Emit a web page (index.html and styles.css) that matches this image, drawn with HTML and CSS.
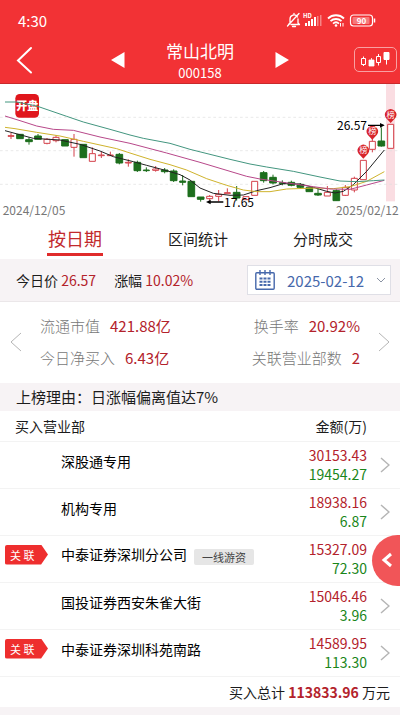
FILE: index.html
```html
<!DOCTYPE html>
<html lang="zh-CN">
<head>
    <meta charset="UTF-8">
    <meta name="viewport" content="width=device-width, initial-scale=1.0">
    <title>常山北明 000158</title>
    <link rel="stylesheet" href="styles.css">
</head>
<body>
    <header class="header">
        <div class="status-bar">
            <span>4:30</span>
            <svg class="status-icons" viewBox="0 0 92 16" aria-hidden="true">
                <!-- muted bell -->
                <g fill="none" stroke="#fff" stroke-width="1.3" stroke-linecap="round" stroke-linejoin="round">
                    <path d="M4 11V7a4 4 0 0 1 7.5-2M12 7v4l1.500 1.500H5M3.500 11.500l-1 1M8 2V1.500M6.500 14.500h3M13 1.500L1.500 14"/>
                </g>
                <!-- signal -->
                <text x="17" y="6" class="hd">HD</text>
                <g fill="#fff">
                    <rect x="19" y="11" width="2" height="3"/>
                    <rect x="22" y="9" width="2" height="5"/>
                    <rect x="25" y="7" width="2" height="7"/>
                    <rect x="28" y="5" width="2" height="9"/>
                    <rect x="31" y="4" width="1.5" height="10" opacity=".4"/>
                    <rect x="34" y="3" width="1.5" height="11" opacity=".4"/>
                </g>
                <!-- wifi -->
                <g fill="none" stroke="#fff" stroke-width="1.8">
                    <path d="M42 6.5a11.500 11.500 0 0 1 16 0M44.500 9.200a8 8 0 0 1 11 0M47 11.600a4.500 4.500 0 0 1 6 0"/>
                    <path d="M54.500 11v3.500M57 11v3.500" stroke-width="1"/>
                </g>
                <circle cx="50" cy="13.5" r="1.3" fill="#fff"/>
                <!-- battery -->
                <rect x="64.5" y="3" width="22" height="11" rx="3" fill="none" stroke="#fff" stroke-width="1.2"/>
                <rect x="66.5" y="5" width="17" height="7" rx="1" fill="#fff" opacity=".35"/>
                <path d="M88.5 6.500v4" stroke="#fff" stroke-width="1.5"/>
                <text x="75.5" y="11.5" text-anchor="middle" class="battery">90</text>
            </svg>
        </div>
        <nav class="nav">
            <a href="#" class="back" aria-label="返回">
                <svg width="18" height="28" viewBox="0 0 18 28"><path d="M15 2L2 14.500L15 26.500" fill="none" stroke="#fff" stroke-width="2" stroke-linecap="round"/></svg>
            </a>
            <div class="stock">
                <button class="icon-btn" aria-label="上一只"><svg width="14" height="16" viewBox="0 0 14 16"><path d="M0 8L13.500 0v16z" fill="#fff"/></svg></button>
                <div class="stock-name">
                    <h1>常山北明</h1>
                    <p>000158</p>
                </div>
                <button class="icon-btn" aria-label="下一只"><svg width="14" height="16" viewBox="0 0 14 16"><path d="M14 8L.5 0v16z" fill="#fff"/></svg></button>
            </div>
            <button class="kline-btn" aria-label="K线">
                <svg width="30" height="16" viewBox="0 0 30 16" fill="none" stroke="#fff">
                    <path d="M.5 6.500h4v6h-4zM2.500 4.500v2M2.500 12.500v1.500"/>
                    <path d="M8 8h5v6H8zM10.500 6v2" fill="#fff" stroke-width=".8"/>
                    <path d="M15.500 4.500h4v6h-4zM17.500 2v2.500M17.500 10.500v3"/>
                    <path d="M23 .5h5v7h-5zM25.500 7v5.500" fill="#fff"/>
                </svg>
            </button>
        </nav>
    </header>

    <main>
        <svg class="chart" viewBox="0 0 1200 408" role="img" aria-label="日K线">
            <rect x="1158" y="0" width="27" height="352" class="today"/>
            <path d="M0 100H1200M0 200H1200M0 301H1200" class="grid"/>
            <rect x="46" y="30" width="71" height="71" rx="13" fill="#e0161c"/>
            <text x="81.5" y="78" text-anchor="middle" class="open-badge">开盘</text>

            <!-- falling candles -->
            <g class="down">
                <path d="M87 160V182M114 150V160M358 207V241M412 230V264M439 250V264M494 252V268M521 256V294M548 273V304M602 340V353M710 306V350M791 261V296M819 272V301M847 289V304M874 290V307M901 297V314M954 312V336M1009 316V350M1144 130V188"/>
                <path d="M50 151h20v13h-20zM77 167h20v6h-20zM104 156h20v10h-20zM185 167h20v19h-20zM240 181h20v40h-20zM348 211h20v26h-20zM402 235h20v25h-20zM430 258h18v2h-18zM484 258h20v5h-20zM511 261h20v29h-20zM539 291h18v4h-18zM564 292h20v46h-20zM592 339h20v7h-20zM700 325h20v17h-20zM781 266h20v24h-20zM809 280h20v17h-20zM838 296h18v3h-18zM864 295h20v9h-20zM891 301h20v9h-20zM918 311h20v12h-20zM944 328h20v5h-20zM999 320h20v30h-20zM1134 171h20v15h-20z"/>
            </g>
            <!-- rising candles -->
            <g class="up">
                <path d="M33 147V165M141 162V181M168 154V175M222 150V218M277 190V209M304 203V222M331 203V215M385 226V248M467 246V263M629 333V350M656 318V352M682 313V328M982 306V324M1036 303V336M1063 278V325M1117 162V205"/>
                <path d="M24 155h18v2h-18zM132 166h18v12h-18zM159 160h18v10h-18zM213 166h18v24h-18zM268 209h18v23h-18zM295 213h18v2h-18zM322 213h18v2h-18zM376 235h18v2h-18zM458 255h18v4h-18zM620 337h18v7h-18zM647 331h18v6h-18zM673 326h18v3h-18zM729 338h18v9h-18zM755 292h18v42h-18zM973 325h18v11h-18zM1027 310h18v24h-18zM1054 283h18v35h-18zM1081 229h18v58h-18zM1108 172h18v24h-18zM1163 121h18v72h-18z"/>
            </g>

            <!-- moving averages -->
            <g class="ma">
                <polyline stroke="#222" points="15,140 70,155 100,163 180,168 240,181 300,201 340,218 400,233 440,244 500,260 540,272 570,288 600,312 640,328 690,334 730,333 770,320 810,311 850,299 900,300 940,310 980,322 1005,327 1030,322 1060,302 1100,262 1153,198"/>
                <polyline stroke="#cfb32c" points="15,130 45,134 110,145 180,156 250,172 350,194 390,207 450,226 510,242 560,258 620,284 680,304 730,318 770,323 810,323 860,315 950,312 1000,314 1050,308 1100,292 1153,263"/>
                <polyline stroke="#b8488a" points="15,96 60,110 110,126 160,136 220,139 300,159 390,178 500,207 600,235 690,262 740,277 780,285 870,298 940,308 990,315 1050,316 1100,303 1153,289"/>
                <polyline stroke="#43967f" points="15,54 50,54 110,66 200,97 250,114 330,136 390,153 430,163 510,178 570,196 630,211 690,226 750,240 800,249 880,262 960,279 1020,291 1070,293 1120,290 1153,288"/>
            </g>

            <!-- listing marks -->
            <g class="marks">
                <path d="M1076 209A17 17 0 1 1 1104 209L1090 224z"/>
                <path d="M1103 152A17 17 0 1 1 1131 152L1117 167z"/>
                <path d="M1158 102A17 17 0 1 1 1186 102L1172 117z"/>
                <text x="1090" y="208">榜</text>
                <text x="1117" y="151">榜</text>
                <text x="1172" y="101">榜</text>
            </g>

            <path d="M1104 124H1150M670 354H624" stroke="#000" stroke-width="4"/>
            <path d="M1154 124l-14-7v14zM618 354l14-7v14z"/>
            <text x="1101" y="137" text-anchor="end" class="price">26.57</text>
            <text x="672" y="368" class="price">17.65</text>
            <text x="8" y="393" class="day">2024/12/05</text>
            <text x="1196" y="393" text-anchor="end" class="day">2025/02/12</text>
        </svg>

        <nav class="tabs">
            <a href="#" class="active">按日期</a>
            <a href="#">区间统计</a>
            <a href="#">分时成交</a>
        </nav>

        <div class="price-bar">
            <p>今日价 <span class="red">26.57</span></p>
            <p>涨幅 <span class="red">10.02%</span></p>
            <div class="date-box">
                <label for="date" aria-label="日期">
                    <svg width="20" height="20" viewBox="0 0 20 20" fill="none" stroke="#4668ab">
                        <rect x=".8" y="2.8" width="18.4" height="16.4" rx="1" stroke-width="1.4"/>
                        <path d="M5 0v5M10 0v5M15 0v5" stroke-width="1.4"/>
                        <path d="M4.500 8.500h11M4.500 11.800h11M4.500 15h11" stroke-width="2" stroke-dasharray="3 1"/>
                    </svg>
                </label>
                <select id="date">
                    <option>2025-02-12</option>
                </select>
                <svg class="chevron" width="10" height="6" viewBox="0 0 10 6"><path d="M1 1l4 4l4-4" fill="none" stroke="#8a93a3"/></svg>
            </div>
        </div>

        <section class="stats">
            <button class="icon-btn" aria-label="上一页"><svg width="12" height="20" viewBox="0 0 12 20"><path d="M11 1L1 10l10 9" fill="none" stroke="#b5b5b5"/></svg></button>
            <dl>
                <div><dt>流通市值</dt><dd>421.88亿</dd></div>
                <div class="end"><dt>换手率</dt><dd>20.92%</dd></div>
                <div><dt>今日净买入</dt><dd>6.43亿</dd></div>
                <div class="end"><dt>关联营业部数</dt><dd>2</dd></div>
            </dl>
            <button class="icon-btn" aria-label="下一页"><svg width="12" height="20" viewBox="0 0 12 20"><path d="M1 1l10 9L1 19" fill="none" stroke="#b5b5b5"/></svg></button>
        </section>

        <h2 class="reason">上榜理由：日涨幅偏离值达7%</h2>

        <div class="list">
            <table>
                <thead>
                    <tr>
                        <th colspan="2">买入营业部</th>
                        <th class="amount">金额(万)</th>
                        <th class="more"></th>
                    </tr>
                </thead>
                <tbody>
                    <tr>
                        <td class="mark"></td>
                        <td class="name">深股通专用</td>
                        <td class="amount"><span class="buy">30153.43</span><span class="sell">19454.27</span></td>
                        <td class="more"><a href="#" aria-label="详情"><svg width="10" height="16" viewBox="0 0 10 16"><path d="M1 1l8 7l-8 7"/></svg></a></td>
                    </tr>
                    <tr>
                        <td class="mark"></td>
                        <td class="name">机构专用</td>
                        <td class="amount"><span class="buy">18938.16</span><span class="sell">6.87</span></td>
                        <td class="more"><a href="#" aria-label="详情"><svg width="10" height="16" viewBox="0 0 10 16"><path d="M1 1l8 7l-8 7"/></svg></a></td>
                    </tr>
                    <tr>
                        <td class="mark"><span class="tag">关 联</span></td>
                        <td class="name">中泰证券深圳分公司<span class="label">一线游资</span></td>
                        <td class="amount"><span class="buy">15327.09</span><span class="sell">72.30</span></td>
                        <td class="more">
                            <button class="drawer" aria-label="展开"><svg width="12" height="16" viewBox="0 0 12 16"><path d="M10 2L3 8l7 6"/></svg></button>
                        </td>
                    </tr>
                    <tr>
                        <td class="mark"></td>
                        <td class="name">国投证券西安朱雀大街</td>
                        <td class="amount"><span class="buy">15046.46</span><span class="sell">3.96</span></td>
                        <td class="more"><a href="#" aria-label="详情"><svg width="10" height="16" viewBox="0 0 10 16"><path d="M1 1l8 7l-8 7"/></svg></a></td>
                    </tr>
                    <tr>
                        <td class="mark"><span class="tag">关 联</span></td>
                        <td class="name">中泰证券深圳科苑南路</td>
                        <td class="amount"><span class="buy">14589.95</span><span class="sell">113.30</span></td>
                        <td class="more"><a href="#" aria-label="详情"><svg width="10" height="16" viewBox="0 0 10 16"><path d="M1 1l8 7l-8 7"/></svg></a></td>
                    </tr>
                </tbody>
            </table>
            <p class="total">买入总计 <strong>113833.96</strong> 万元</p>
        </div>
    </main>
</body>
</html>
```

FILE: styles.css
```css
* { box-sizing: border-box; margin: 0; padding: 0; }
body { font-family: "Noto Sans CJK SC", "Noto Sans", sans-serif; font-size: 14px; color: #1c1c1c; background: #fff; overflow-x: hidden; }
a { color: inherit; text-decoration: none; }
button { background: none; border: none; cursor: pointer; }
svg { display: block; }
.red { color: #b3222b; }
.icon-btn { display: flex; align-items: center; justify-content: center; }

/* header */
.header { background: #f23235; color: #fff; border-bottom: 1px solid #c9292c; }
.status-bar { display: flex; justify-content: space-between; align-items: center; height: 36px; padding: 4px 22px 0 18px; font-size: 15px; }
.status-icons { width: 92px; height: 16px; }
.hd { font-size: 6px; font-weight: bold; fill: #fff; }
.battery { font-size: 8px; font-weight: bold; fill: #fff; }
.nav { display: flex; justify-content: space-between; align-items: center; height: 47px; padding: 0 3px 0 16px; }
.back { width: 30px; }
.stock { display: flex; align-items: center; gap: 41px; }
.stock-name { text-align: center; }
.stock-name h1 { font-size: 17px; line-height: 25px; font-weight: normal; }
.stock-name p { font-size: 13px; line-height: 19px; }
.kline-btn { display: flex; align-items: center; justify-content: center; width: 43px; height: 25px; border: 1px solid #f9a0a2; border-radius: 5px; }

/* chart */
.chart { width: 100%; }
.today { fill: #fadde2; }
.grid { stroke: #dedede; stroke-width: 2; stroke-dasharray: 8 8; }
.open-badge { font-size: 33px; font-weight: 900; fill: #fff; }
.down { fill: #1d6e1d; stroke: #1d6e1d; stroke-width: 3; }
.up { fill: #fff; stroke: #d3404a; stroke-width: 3; }
.ma { fill: none; stroke-width: 3; stroke-linejoin: round; }
.marks { fill: #d8252c; }
.marks text { font-size: 25px; fill: #fff; text-anchor: middle; }
.price { font-size: 36px; fill: #000; }
.day { font-size: 36px; fill: #777; }

/* tabs */
.tabs { display: flex; justify-content: space-between; height: 39px; padding: 0 47px; }
.tabs a { font-size: 15px; line-height: 37px; }
.tabs .active { height: 36px; padding: 0 1px; font-size: 18px; color: #c22a2d; border-bottom: 3px solid #e02b2b; }

/* price and date */
.price-bar { display: flex; align-items: center; gap: 18px; height: 43px; padding: 0 9px 0 16px; background: #f7f3f5; border-bottom: 1px solid #ebe7e9; }
.date-box { position: relative; display: flex; align-items: center; width: 144px; height: 30px; margin-left: auto; padding-left: 7px; background: #fff; border: 1px solid #dfdfe6; }
.date-box select { flex: 1; height: 28px; padding-left: 12px; font: inherit; font-size: 15px; color: #4668ab; background: none; border: none; appearance: none; }
.chevron { position: absolute; right: 4px; pointer-events: none; }

/* stats */
.stats { display: flex; align-items: center; gap: 18px; height: 81px; padding: 0 10px 2px; }
.stats dl { flex: 1; display: grid; grid-template-columns: auto auto; font-size: 15px; line-height: 32px; }
.stats dl div { display: flex; gap: 10px; }
.stats .end { justify-content: flex-end; }
.stats dt { color: #777; font-weight: 300; }
.stats dd { color: #b3222b; }

.reason { height: 28px; padding-left: 16px; font-size: 15px; line-height: 27px; font-weight: normal; background: #f7f3f5; }

/* departments */
.list { border-bottom: 8px solid #f7f3f5; }
table { width: 100%; border-collapse: collapse; }
th { height: 30px; padding-left: 15px; font-weight: normal; text-align: left; }
tr { border-bottom: 1px solid #f3f3f3; }
td { height: 47px; }
.mark { width: 61px; padding: 0 0 8px 5px; }
.name { padding-bottom: 8px; color: #000; white-space: nowrap; }
.amount { text-align: right; }
.amount span { display: block; line-height: 19px; }
.buy { color: #b3222b; }
.sell { color: #1a861a; }
.more { position: relative; width: 33px; padding-left: 13px; }
.more path { fill: none; stroke: #b5b5b5; stroke-width: 1.5; }
.tag { display: block; width: 43px; padding-left: 5px; font-size: 11px; line-height: 20px; color: #fff; background: #ee2e2e; border-radius: 2px; clip-path: polygon(0 0, 84% 0, 100% 50%, 84% 100%, 0 100%); }
.label { display: inline-block; margin-left: 7px; padding: 0 8px; font-size: 11px; line-height: 16px; color: #444; background: #e6e6e6; border-radius: 2px; vertical-align: middle; }
.more .drawer { position: absolute; top: -1px; right: 0; display: flex; align-items: center; width: 28px; height: 51px; padding-left: 9px; background: #f15558; border-radius: 26px 0 0 26px; }
.more .drawer path { stroke: #fff; stroke-width: 3; }
.total { height: 30px; padding-right: 10px; line-height: 30px; text-align: right; }
.total strong { color: #b3222b; }
```
